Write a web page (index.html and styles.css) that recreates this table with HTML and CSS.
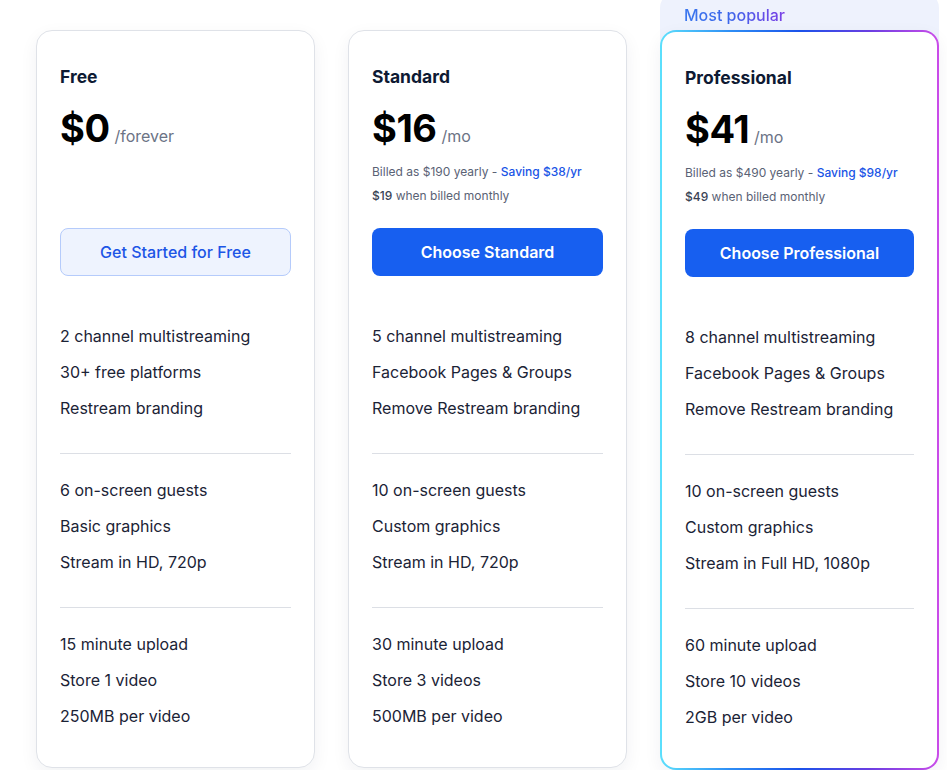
FILE: index.html
```html
<!DOCTYPE html>
<html lang="en">
<head>
<meta charset="utf-8">
<title>Pricing</title>
<link rel="stylesheet" href="styles.css">
</head>
<body>
<div class="plans">
  <div class="plan-col">
    <div class="card">
      <h3 class="plan-name">Free</h3>
      <div class="price"><span class="amount">$0</span><span class="period">/forever</span></div>
      <div class="billing"></div>
      <a class="btn btn-light">Get Started for Free</a>
      <ul class="group first">
        <li>2 channel multistreaming</li>
        <li>30+ free platforms</li>
        <li>Restream branding</li>
      </ul>
      <ul class="group">
        <li>6 on-screen guests</li>
        <li>Basic graphics</li>
        <li>Stream in HD, 720p</li>
      </ul>
      <ul class="group">
        <li>15 minute upload</li>
        <li>Store 1 video</li>
        <li>250MB per video</li>
      </ul>
    </div>
  </div>
  <div class="plan-col">
    <div class="card">
      <h3 class="plan-name">Standard</h3>
      <div class="price"><span class="amount">$16</span><span class="period">/mo</span></div>
      <div class="billing">
        <p>Billed as $190 yearly - <span class="saving">Saving $38/yr</span></p>
        <p><span class="strong">$19</span> when billed monthly</p>
      </div>
      <a class="btn btn-primary">Choose Standard</a>
      <ul class="group first">
        <li>5 channel multistreaming</li>
        <li>Facebook Pages &amp; Groups</li>
        <li>Remove Restream branding</li>
      </ul>
      <ul class="group">
        <li>10 on-screen guests</li>
        <li>Custom graphics</li>
        <li>Stream in HD, 720p</li>
      </ul>
      <ul class="group">
        <li>30 minute upload</li>
        <li>Store 3 videos</li>
        <li>500MB per video</li>
      </ul>
    </div>
  </div>
  <div class="plan-col popular">
    <div class="badge">Most popular</div>
    <div class="card card-pro">
      <h3 class="plan-name">Professional</h3>
      <div class="price"><span class="amount">$41</span><span class="period">/mo</span></div>
      <div class="billing">
        <p>Billed as $490 yearly - <span class="saving">Saving $98/yr</span></p>
        <p><span class="strong">$49</span> when billed monthly</p>
      </div>
      <a class="btn btn-primary">Choose Professional</a>
      <ul class="group first">
        <li>8 channel multistreaming</li>
        <li>Facebook Pages &amp; Groups</li>
        <li>Remove Restream branding</li>
      </ul>
      <ul class="group">
        <li>10 on-screen guests</li>
        <li>Custom graphics</li>
        <li>Stream in Full HD, 1080p</li>
      </ul>
      <ul class="group">
        <li>60 minute upload</li>
        <li>Store 10 videos</li>
        <li>2GB per video</li>
      </ul>
    </div>
  </div>
</div>
</body>
</html>
```

FILE: styles.css
```css
* { box-sizing: border-box; }
html, body { margin: 0; padding: 0; background: #ffffff; }
body {
  font-family: Inter, "Noto Sans", Arial, sans-serif;
  color: #1b2336;
  overflow: hidden;
}
.plans {
  display: flex;
  align-items: flex-start;
  gap: 33px;
  padding: 30px 0 0 36px;
}
.plan-col { width: 279px; flex: none; }
.card {
  background: #fff;
  border: 1px solid #dfe2e8;
  border-radius: 16px;
  padding: 34px 23px 33px;
  box-shadow: 0 6px 18px rgba(20, 30, 60, 0.06);
}
.plan-name {
  margin: 0;
  font-size: 17.5px;
  line-height: 24px;
  font-weight: 700;
  color: #0e1a33;
}
.price {
  margin-top: 15px;
  display: flex;
  align-items: baseline;
  height: 48px;
}
.amount {
  font-size: 38px;
  line-height: 48px;
  font-weight: 700;
  color: #000;
  letter-spacing: -0.5px;
}
.period {
  margin-left: 5px;
  font-size: 16px;
  color: #6b7385;
}
.billing {
  margin-top: 8px;
  height: 48px;
}
.billing p {
  margin: 0;
  font-size: 12px;
  line-height: 24px;
  color: #5a6275;
}
.saving { color: #1a55e6; font-weight: 500; }
.strong { color: #3a4254; font-weight: 500; }
.btn {
  display: flex;
  align-items: center;
  justify-content: center;
  margin-top: 20px;
  height: 48px;
  border-radius: 8px;
  font-size: 16px;
  font-weight: 600;
  cursor: pointer;
}
.btn-light {
  background: #eef3fe;
  border: 1px solid #b5cbfb;
  color: #1c55e6;
  font-weight: 500;
}
.btn-primary {
  background: #175ff0;
  color: #fff;
}
.group {
  list-style: none;
  margin: 0;
  padding: 18px 0 0;
  border-top: 1px solid #dcdfe5;
  margin-top: 27px;
}
.group.first { border-top: none; margin-top: 42px; padding-top: 0; }
.group li {
  font-size: 16px;
  line-height: 36px;
  color: #1b2336;
}
.popular {
  margin-top: -38px;
  background: #eef2fd;
  border-radius: 16px;
}
.badge {
  padding: 9px 0 1px 24px;
  font-size: 16px;
  line-height: 28px;
  font-weight: 500;
  background: linear-gradient(90deg, #3a80f0 0%, #3c66ea 55%, #7b40e6 100%);
  -webkit-background-clip: text;
  background-clip: text;
  color: transparent;
  width: max-content;
}
.card-pro {
  border: 2px solid transparent;
  background:
    linear-gradient(#fff, #fff) padding-box,
    linear-gradient(90deg, #5ce0fc 0%, #2e8ef5 25%, #1a52ea 50%, #6a3ee2 75%, #cb4ce9 100%) border-box;
}
```
